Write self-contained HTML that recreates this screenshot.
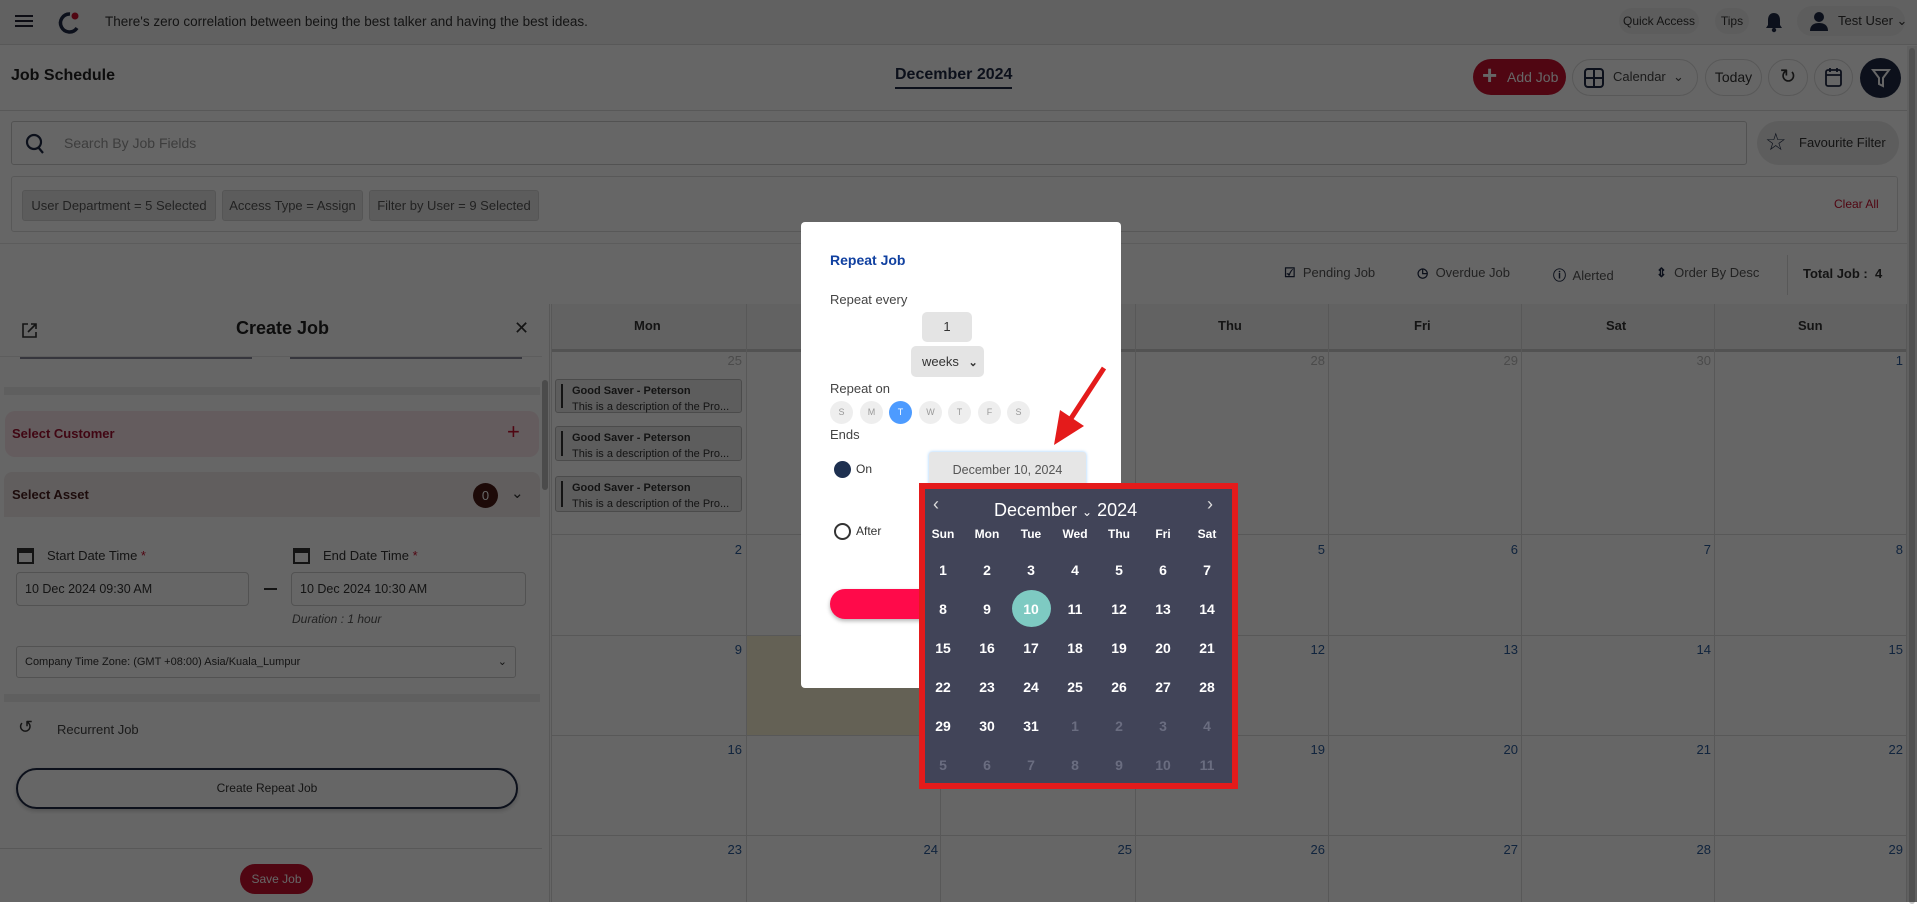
<!DOCTYPE html>
<html><head><meta charset="utf-8"><style>
*{box-sizing:border-box;margin:0;padding:0}
body{width:1917px;height:902px;overflow:hidden;position:relative;background:#fff;font-family:"Liberation Sans",sans-serif;color:#333}
.a{position:absolute}
.t{position:absolute;white-space:nowrap}
.pill{position:absolute;border:1px solid #ddd;border-radius:22px;background:#fff}
.chip{position:absolute;top:190px;height:31px;background:#e6e6e6;border:1px solid #d5d5d5;border-radius:3px;font-size:13px;color:#555;line-height:29px;text-align:center}
.vl{position:absolute;top:304px;width:1px;height:598px;background:#ddd}
.hl{position:absolute;left:551px;width:1356px;height:1px;background:#ddd}
.dn{position:absolute;font-size:13px;color:#2a5a9a;text-align:right;width:30px}
.ev{position:absolute;left:555px;width:187px;background:#e8e8e8;border:1px solid #bbb;border-radius:3px;font-size:11px;padding:3px 0 0 16px;line-height:16px}
.ev:before{content:"";position:absolute;left:5px;top:4px;bottom:4px;width:2px;background:#333}
.day{position:absolute;top:401px;width:23px;height:23px;border-radius:50%;background:#eee;font-size:9px;color:#999;text-align:center;line-height:23px}
.cd{position:absolute;width:40px;text-align:center;font-size:14px;font-weight:bold;color:#fff}
.wd{position:absolute;top:527px;width:40px;text-align:center;font-size:12px;font-weight:bold;color:#fff}
.g{color:#6a6d80}
</style></head><body>
<!-- top bar -->
<div class="a" style="left:0;top:0;width:1917px;height:45px;background:#f2f2f2;border-bottom:1px solid #ddd"></div>
<div class="a" style="left:15px;top:15px;width:18px;height:2px;background:#223;box-shadow:0 5px 0 #223,0 10px 0 #223"></div>
<svg class="a" style="left:56px;top:10px" width="26" height="26" viewBox="0 0 26 26"><path d="M14 4 A9 9 0 1 0 21 18" fill="none" stroke="#1e2a44" stroke-width="3.5"/><circle cx="19" cy="6" r="3.5" fill="#c8102e"/></svg>
<div class="t" style="left:105px;top:14px;font-size:13.5px;color:#333">There's zero correlation between being the best talker and having the best ideas.</div>
<div class="pill" style="left:1619px;top:8px;width:80px;height:26px;border:none;background:#e8e8e8;font-size:12px;line-height:26px;text-align:center">Quick Access</div>
<div class="pill" style="left:1715px;top:8px;width:34px;height:26px;border:none;background:#e8e8e8;font-size:12px;line-height:26px;text-align:center">Tips</div>
<svg class="a" style="left:1765px;top:11px" width="18" height="22" viewBox="0 0 18 22"><path d="M9 2C5 2 3 5 3 9v5l-2 3h16l-2-3V9c0-4-2-7-6-7z" fill="#1e2a44"/><circle cx="9" cy="19" r="2.2" fill="#1e2a44"/></svg>
<div class="pill" style="left:1797px;top:6px;width:108px;height:30px;border:none;background:#e8e8e8"></div>
<svg class="a" style="left:1810px;top:11px" width="18" height="20"><circle cx="9" cy="6" r="5" fill="#1e2a44"/><path d="M0 20c0-6 4-8 9-8s9 2 9 8z" fill="#1e2a44"/></svg>
<div class="t" style="left:1838px;top:13px;font-size:13px">Test User ⌄</div>
<!-- job schedule row -->
<div class="t" style="left:11px;top:67px;font-size:16px;font-weight:bold;color:#222">Job Schedule</div>
<div class="t" style="left:895px;top:66px;font-size:16px;font-weight:bold;color:#1e2a44;border-bottom:2px solid #1e2a44;padding-bottom:3px">December 2024</div>
<div class="pill" style="left:1473px;top:59px;width:93px;height:36px;border:none;background:#c8102e;color:#fff;font-size:14px;line-height:36px;padding-left:34px">Add Job</div>
<div class="t" style="left:1482px;top:60px;font-size:26px;color:#fff;font-weight:bold">+</div>
<div class="pill" style="left:1572px;top:59px;width:126px;height:37px"></div>
<svg class="a" style="left:1584px;top:68px" width="20" height="20"><rect x="1" y="1" width="18" height="18" rx="3" fill="none" stroke="#1e2a44" stroke-width="2"/><path d="M10 1v18M1 10h18" stroke="#1e2a44" stroke-width="2"/></svg>
<div class="t" style="left:1613px;top:69px;font-size:13px;color:#444">Calendar &nbsp;⌄</div>
<div class="pill" style="left:1705px;top:59px;width:57px;height:37px;font-size:14px;line-height:35px;text-align:center">Today</div>
<div class="pill" style="left:1768px;top:59px;width:40px;height:37px;font-size:20px;line-height:35px;text-align:center">↻</div>
<div class="pill" style="left:1814px;top:59px;width:39px;height:37px"></div>
<svg class="a" style="left:1825px;top:67px" width="17" height="20"><rect x="1" y="3" width="15" height="16" rx="2" fill="none" stroke="#1e2a44" stroke-width="1.8"/><path d="M1 8h15M5 1v4M12 1v4" stroke="#1e2a44" stroke-width="1.8"/></svg>
<div class="a" style="left:1860px;top:58px;width:41px;height:40px;border-radius:50%;background:#1e2a44"></div>
<svg class="a" style="left:1871px;top:68px" width="20" height="20"><path d="M2 2h16l-6 8v8l-4-2v-6z" fill="none" stroke="#fff" stroke-width="2"/></svg>
<div class="a" style="left:0;top:110px;width:1907px;height:1px;background:#ddd"></div>
<div class="a" style="left:1907px;top:46px;width:10px;height:856px;background:#f1f1f1"></div>
<div class="a" style="left:1909px;top:48px;width:6px;height:856px;background:#c8c8c8;border-radius:3px"></div>
<!-- search -->
<div class="a" style="left:11px;top:121px;width:1736px;height:44px;border:1px solid #ccc;border-radius:3px"></div>
<svg class="a" style="left:25px;top:133px" width="20" height="22"><circle cx="9" cy="9" r="7" fill="none" stroke="#1e2a44" stroke-width="2.2"/><path d="M13 14l5 6" stroke="#1e2a44" stroke-width="2.2"/></svg>
<div class="t" style="left:64px;top:135px;font-size:14px;color:#999">Search By Job Fields</div>
<div class="pill" style="left:1757px;top:121px;width:142px;height:44px;border:none;background:#e8e8e8;font-size:13px;line-height:44px;padding-left:42px">Favourite Filter</div>
<div class="t" style="left:1765px;top:128px;font-size:24px;color:#1e2a44">☆</div>
<!-- filters -->
<div class="a" style="left:11px;top:176px;width:1887px;height:56px;border:1px solid #ddd;border-radius:3px"></div>
<div class="chip" style="left:22px;width:194px">User Department = 5 Selected</div>
<div class="chip" style="left:222px;width:141px">Access Type = Assign</div>
<div class="chip" style="left:369px;width:170px">Filter by User = 9 Selected</div>
<div class="t" style="left:1834px;top:197px;font-size:12px;color:#c8102e">Clear All</div>
<div class="a" style="left:0;top:243px;width:1907px;height:1px;background:#e5e5e5"></div>
<!-- stats -->
<div class="t" style="left:1284px;top:265px;font-size:13px;color:#555"><b style="color:#1e2a44">☑</b>&nbsp; Pending Job</div>
<div class="t" style="left:1417px;top:265px;font-size:13px;color:#555"><b style="color:#1e2a44">◷</b>&nbsp; Overdue Job</div>
<div class="t" style="left:1553px;top:265px;font-size:13px;color:#555"><b style="color:#1e2a44">ⓘ</b>&nbsp; Alerted</div>
<div class="t" style="left:1656px;top:265px;font-size:13px;color:#555"><b style="color:#1e2a44">⇕</b>&nbsp; Order By Desc</div>
<div class="a" style="left:1787px;top:255px;width:1px;height:40px;background:#ddd"></div>
<div class="t" style="left:1803px;top:266px;font-size:13px;font-weight:bold;color:#333">Total Job : &nbsp;4</div>
<!-- calendar grid -->
<div class="a" style="left:551px;top:304px;width:1356px;height:48px;background:#f5f5f5;border-bottom:3px solid #ccc"></div>
<div class="a" style="left:746px;top:635px;width:194px;height:100px;background:#fbf3d5"></div>
<div class="vl" style="left:551px"></div><div class="vl" style="left:746px"></div><div class="vl" style="left:940px"></div><div class="vl" style="left:1135px"></div><div class="vl" style="left:1328px"></div><div class="vl" style="left:1521px"></div><div class="vl" style="left:1714px"></div><div class="vl" style="left:1906px"></div>
<div class="hl" style="top:534px"></div><div class="hl" style="top:635px"></div><div class="hl" style="top:735px"></div><div class="hl" style="top:835px"></div>
<div class="t" style="left:634px;top:318px;font-size:13px;font-weight:bold">Mon</div>
<div class="t" style="left:1218px;top:318px;font-size:13px;font-weight:bold">Thu</div>
<div class="t" style="left:1414px;top:318px;font-size:13px;font-weight:bold">Fri</div>
<div class="t" style="left:1606px;top:318px;font-size:13px;font-weight:bold">Sat</div>
<div class="t" style="left:1798px;top:318px;font-size:13px;font-weight:bold">Sun</div>
<div class="dn" style="left:712px;top:353px;color:#bbb">25</div><div class="dn" style="left:1295px;top:353px;color:#bbb">28</div><div class="dn" style="left:1488px;top:353px;color:#bbb">29</div><div class="dn" style="left:1681px;top:353px;color:#bbb">30</div><div class="dn" style="left:1873px;top:353px">1</div>
<div class="dn" style="left:712px;top:542px">2</div><div class="dn" style="left:1295px;top:542px">5</div><div class="dn" style="left:1488px;top:542px">6</div><div class="dn" style="left:1681px;top:542px">7</div><div class="dn" style="left:1873px;top:542px">8</div>
<div class="dn" style="left:712px;top:642px">9</div><div class="dn" style="left:1295px;top:642px">12</div><div class="dn" style="left:1488px;top:642px">13</div><div class="dn" style="left:1681px;top:642px">14</div><div class="dn" style="left:1873px;top:642px">15</div>
<div class="dn" style="left:712px;top:742px">16</div><div class="dn" style="left:1295px;top:742px">19</div><div class="dn" style="left:1488px;top:742px">20</div><div class="dn" style="left:1681px;top:742px">21</div><div class="dn" style="left:1873px;top:742px">22</div>
<div class="dn" style="left:712px;top:842px">23</div><div class="dn" style="left:908px;top:842px">24</div><div class="dn" style="left:1102px;top:842px">25</div><div class="dn" style="left:1295px;top:842px">26</div><div class="dn" style="left:1488px;top:842px">27</div><div class="dn" style="left:1681px;top:842px">28</div><div class="dn" style="left:1873px;top:842px">29</div>
<div class="ev" style="top:379px;height:34px"><b>Good Saver - Peterson</b><br>This is a description of the Pro...</div>
<div class="ev" style="top:426px;height:35px"><b>Good Saver - Peterson</b><br>This is a description of the Pro...</div>
<div class="ev" style="top:476px;height:36px"><b>Good Saver - Peterson</b><br>This is a description of the Pro...</div>
<!-- left panel -->
<div class="a" style="left:0;top:304px;width:550px;height:598px;background:#fff;border-right:1px solid #ddd"></div>
<div class="a" style="left:542px;top:380px;width:6px;height:110px;background:#bbb;border-radius:3px"></div>
<svg class="a" style="left:21px;top:322px" width="17" height="17"><path d="M7 2H2v13h13v-5M10 2h5v5M15 2L7 10" fill="none" stroke="#333" stroke-width="1.6"/></svg>
<div class="t" style="left:236px;top:318px;font-size:18px;font-weight:bold;color:#222">Create Job</div>
<div class="t" style="left:514px;top:318px;font-size:18px;color:#333">✕</div>
<div class="a" style="left:0;top:356px;width:542px;height:1px;background:#e8e8e8"></div>
<div class="a" style="left:20px;top:357px;width:232px;height:2px;background:#889"></div>
<div class="a" style="left:290px;top:357px;width:232px;height:2px;background:#889"></div>
<div class="a" style="left:4px;top:387px;width:536px;height:8px;background:#eee"></div>
<div class="a" style="left:5px;top:411px;width:534px;height:46px;background:#fbe6ea;border-radius:10px"></div>
<div class="t" style="left:12px;top:426px;font-size:13px;font-weight:bold;color:#a01030">Select Customer</div>
<div class="t" style="left:507px;top:419px;font-size:22px;color:#c8102e">+</div>
<div class="a" style="left:4px;top:472px;width:536px;height:45px;background:#f2ecec;border-radius:8px 8px 0 0"></div>
<div class="t" style="left:12px;top:487px;font-size:13px;font-weight:bold;color:#4a2020">Select Asset</div>
<div class="a" style="left:473px;top:483px;width:25px;height:25px;border-radius:50%;background:#4a1a14;color:#fff;font-size:13px;text-align:center;line-height:25px">0</div>
<div class="t" style="left:511px;top:484px;font-size:15px;color:#333">⌄</div>
<svg class="a" style="left:17px;top:547px" width="17" height="17"><rect x="1" y="2" width="15" height="14" fill="none" stroke="#333" stroke-width="2"/><rect x="1" y="2" width="15" height="4" fill="#333"/></svg>
<div class="t" style="left:47px;top:548px;font-size:13px">Start Date Time <span style="color:#c8102e">*</span></div>
<svg class="a" style="left:293px;top:547px" width="17" height="17"><rect x="1" y="2" width="15" height="14" fill="none" stroke="#333" stroke-width="2"/><rect x="1" y="2" width="15" height="4" fill="#333"/></svg>
<div class="t" style="left:323px;top:548px;font-size:13px">End Date Time <span style="color:#c8102e">*</span></div>
<div class="a" style="left:16px;top:572px;width:233px;height:34px;border:1px solid #ccc;border-radius:4px;font-size:12.5px;line-height:32px;padding-left:8px">10 Dec 2024 09:30 AM</div>
<div class="a" style="left:264px;top:588px;width:13px;height:2px;background:#333"></div>
<div class="a" style="left:291px;top:572px;width:235px;height:34px;border:1px solid #ccc;border-radius:4px;font-size:12.5px;line-height:32px;padding-left:8px">10 Dec 2024 10:30 AM</div>
<div class="t" style="left:292px;top:612px;font-size:12px;font-style:italic;color:#555">Duration : 1 hour</div>
<div class="a" style="left:16px;top:646px;width:500px;height:32px;border:1px solid #ccc;border-radius:3px;font-size:11px;line-height:30px;padding-left:8px">Company Time Zone: (GMT +08:00) Asia/Kuala_Lumpur<span style="position:absolute;right:8px">⌄</span></div>
<div class="a" style="left:4px;top:694px;width:536px;height:8px;background:#eee"></div>
<div class="t" style="left:18px;top:717px;font-size:18px;color:#333">↺</div>
<div class="t" style="left:57px;top:722px;font-size:13px;color:#444">Recurrent Job</div>
<div class="a" style="left:16px;top:768px;width:502px;height:41px;border:2px solid #1e2a44;border-radius:21px;font-size:12px;text-align:center;line-height:37px;color:#333;box-shadow:0 2px 4px rgba(0,0,0,.2)">Create Repeat Job</div>
<div class="a" style="left:0;top:848px;width:542px;height:1px;background:#ddd"></div>
<div class="a" style="left:240px;top:864px;width:73px;height:30px;border-radius:15px;background:#c8102e;color:#fff;font-size:12px;text-align:center;line-height:30px">Save Job</div>
<!-- overlay -->
<div class="a" style="left:0;top:0;width:1917px;height:902px;background:rgba(0,0,0,.6)"></div>
<!-- modal -->
<div class="a" style="left:801px;top:222px;width:320px;height:466px;background:#fff;border-radius:4px"></div>
<div class="t" style="left:830px;top:252px;font-size:14px;font-weight:bold;color:#1040a0">Repeat Job</div>
<div class="t" style="left:830px;top:292px;font-size:13px;color:#444">Repeat every</div>
<div class="a" style="left:922px;top:312px;width:50px;height:30px;background:#e4e4e4;border-radius:5px;font-size:13px;text-align:center;line-height:30px">1</div>
<div class="a" style="left:911px;top:346px;width:73px;height:31px;background:#e4e4e4;border-radius:5px;font-size:13px;line-height:31px;padding-left:11px">weeks <b style="font-size:11px;margin-left:6px">⌄</b></div>
<div class="t" style="left:830px;top:381px;font-size:13px;color:#444">Repeat on</div>
<div class="day" style="left:830px">S</div><div class="day" style="left:860px">M</div><div class="day" style="left:889px;background:#4d9bff;color:#fff">T</div><div class="day" style="left:919px">W</div><div class="day" style="left:948px">T</div><div class="day" style="left:978px">F</div><div class="day" style="left:1007px">S</div>
<div class="t" style="left:830px;top:427px;font-size:13px;color:#444">Ends</div>
<div class="a" style="left:834px;top:461px;width:17px;height:17px;border-radius:50%;background:#1e3050"></div>
<div class="t" style="left:856px;top:462px;font-size:12px;color:#333">On</div>
<div class="a" style="left:929px;top:452px;width:157px;height:36px;background:#e6e6e6;border-radius:3px;box-shadow:0 0 3px #9cf;font-size:12.5px;line-height:36px;text-align:center;color:#555">December 10, 2024</div>
<div class="a" style="left:834px;top:523px;width:17px;height:17px;border-radius:50%;border:2px solid #333"></div>
<div class="t" style="left:856px;top:524px;font-size:12px;color:#333">After</div>
<div class="a" style="left:830px;top:589px;width:120px;height:30px;background:#ff0a4a;border-radius:15px 0 0 15px;box-shadow:0 2px 4px rgba(0,0,0,.3)"></div>
<!-- calendar popup -->
<div class="a" style="left:919px;top:483px;width:319px;height:306px;background:#414458;border:6px solid #e41b1b"></div>
<div class="t" style="left:933px;top:494px;font-size:18px;color:#ddd">‹</div>
<div class="t" style="left:1207px;top:494px;font-size:18px;color:#ddd">›</div>
<div class="t" style="left:994px;top:500px;font-size:18px;color:#fff">December <span style="font-size:12px">⌄</span> 2024</div>
<div class="wd" style="left:923px">Sun</div><div class="wd" style="left:967px">Mon</div><div class="wd" style="left:1011px">Tue</div><div class="wd" style="left:1055px">Wed</div><div class="wd" style="left:1099px">Thu</div><div class="wd" style="left:1143px">Fri</div><div class="wd" style="left:1187px">Sat</div>
<div class="a" style="left:1012px;top:590px;width:39px;height:37px;border-radius:50%;background:#7ecac2"></div>
<div class="cd" style="left:923px;top:562px">1</div><div class="cd" style="left:967px;top:562px">2</div><div class="cd" style="left:1011px;top:562px">3</div><div class="cd" style="left:1055px;top:562px">4</div><div class="cd" style="left:1099px;top:562px">5</div><div class="cd" style="left:1143px;top:562px">6</div><div class="cd" style="left:1187px;top:562px">7</div>
<div class="cd" style="left:923px;top:601px">8</div><div class="cd" style="left:967px;top:601px">9</div><div class="cd" style="left:1011px;top:601px">10</div><div class="cd" style="left:1055px;top:601px">11</div><div class="cd" style="left:1099px;top:601px">12</div><div class="cd" style="left:1143px;top:601px">13</div><div class="cd" style="left:1187px;top:601px">14</div>
<div class="cd" style="left:923px;top:640px">15</div><div class="cd" style="left:967px;top:640px">16</div><div class="cd" style="left:1011px;top:640px">17</div><div class="cd" style="left:1055px;top:640px">18</div><div class="cd" style="left:1099px;top:640px">19</div><div class="cd" style="left:1143px;top:640px">20</div><div class="cd" style="left:1187px;top:640px">21</div>
<div class="cd" style="left:923px;top:679px">22</div><div class="cd" style="left:967px;top:679px">23</div><div class="cd" style="left:1011px;top:679px">24</div><div class="cd" style="left:1055px;top:679px">25</div><div class="cd" style="left:1099px;top:679px">26</div><div class="cd" style="left:1143px;top:679px">27</div><div class="cd" style="left:1187px;top:679px">28</div>
<div class="cd" style="left:923px;top:718px">29</div><div class="cd" style="left:967px;top:718px">30</div><div class="cd" style="left:1011px;top:718px">31</div><div class="cd g" style="left:1055px;top:718px">1</div><div class="cd g" style="left:1099px;top:718px">2</div><div class="cd g" style="left:1143px;top:718px">3</div><div class="cd g" style="left:1187px;top:718px">4</div>
<div class="cd g" style="left:923px;top:757px">5</div><div class="cd g" style="left:967px;top:757px">6</div><div class="cd g" style="left:1011px;top:757px">7</div><div class="cd g" style="left:1055px;top:757px">8</div><div class="cd g" style="left:1099px;top:757px">9</div><div class="cd g" style="left:1143px;top:757px">10</div><div class="cd g" style="left:1187px;top:757px">11</div>
<!-- arrow -->
<svg class="a" style="left:1042px;top:360px" width="70" height="95"><path d="M62 8L28 60" stroke="#e41b1b" stroke-width="5"/><path d="M12 85L18 50L42 66z" fill="#e41b1b"/></svg>
</body></html>
